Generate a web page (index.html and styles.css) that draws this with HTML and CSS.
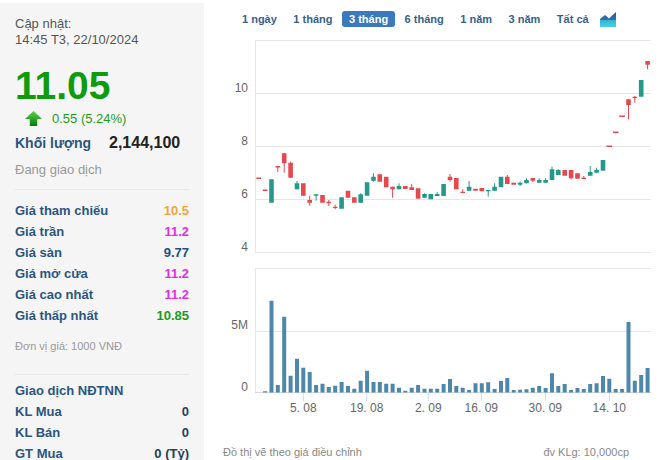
FILE: index.html
```html
<!DOCTYPE html>
<html lang="vi">
<head>
<meta charset="utf-8">
<title>Biểu đồ giá</title>
<link rel="stylesheet" href="styles.css">
</head>
<body>
<div class="wrap">
  <aside class="panel">
    <div class="upd">Cập nhật:<br>14:45 T3, 22/10/2024</div>
    <div class="price">11.05</div>
    <div class="change">
      <svg class="arrow" width="17" height="15" viewBox="0 0 17 15">
        <defs>
          <linearGradient id="ag" x1="0" y1="0" x2="0" y2="1">
            <stop offset="0" stop-color="#5fd34a"/>
            <stop offset="1" stop-color="#067a06"/>
          </linearGradient>
        </defs>
        <path d="M8.5 0L17 8H12.2V15H4.8V8H0Z" fill="url(#ag)"/>
      </svg>
      <span>0.55 (5.24%)</span>
    </div>
    <div class="vol"><span class="vol-l">Khối lượng</span><span class="vol-v">2,144,100</span></div>
    <div class="status">Đang giao dịch</div>
    <div class="sep"></div>
    <div class="rows">
      <div class="row"><span>Giá tham chiếu</span><span class="c-ref">10.5</span></div>
      <div class="row"><span>Giá trần</span><span class="c-ceil">11.2</span></div>
      <div class="row"><span>Giá sàn</span><span class="c-floor">9.77</span></div>
      <div class="row"><span>Giá mở cửa</span><span class="c-ceil">11.2</span></div>
      <div class="row"><span>Giá cao nhất</span><span class="c-ceil">11.2</span></div>
      <div class="row"><span>Giá thấp nhất</span><span class="c-up">10.85</span></div>
    </div>
    <div class="unit">Đơn vị giá: 1000 VNĐ</div>
    <div class="sep sep2"></div>
    <div class="rows rows2">
      <div class="row"><span>Giao dịch NĐTNN</span></div>
      <div class="row"><span>KL Mua</span><span class="c-n">0</span></div>
      <div class="row"><span>KL Bán</span><span class="c-n">0</span></div>
      <div class="row"><span>GT Mua</span><span class="c-n">0 (Tỷ)</span></div>
    </div>
  </aside>
  <main class="chart">
    <div class="ranges">
      <span class="rb">1 ngày</span>
      <span class="rb">1 tháng</span>
      <span class="rb active">3 tháng</span>
      <span class="rb">6 tháng</span>
      <span class="rb">1 năm</span>
      <span class="rb">3 năm</span>
      <span class="rb">Tất cả</span>
      <svg class="type-ic" width="16" height="15" viewBox="0 0 16 15">
        <defs>
          <linearGradient id="ig" x1="0" y1="0" x2="0" y2="1">
            <stop offset="0" stop-color="#2b55a3"/>
            <stop offset=".5" stop-color="#2e6db0"/>
            <stop offset=".56" stop-color="#34b6cf"/>
            <stop offset="1" stop-color="#45d2e2"/>
          </linearGradient>
        </defs>
        <path d="M0 7L5 3L9 6.5L16 0V15H0Z" fill="url(#ig)"/>
      </svg>
    </div>
    <svg class="plot" width="458" height="400" viewBox="204 38 458 400">
      <g class="grid">
        <path d="M255 40.5H651M255 93.5H651M255 146.5H651M255 199.5H651M255 252.5H651"/>
        <path d="M255 268.5H651M255 331.5H651"/>
        <path d="M255.5 40V253M255.5 268V393"/>
      </g>
      <path class="xaxis" d="M255 392.5H651M303.3 393V401M366.7 393V401M428.3 393V401M481.3 393V401M545.3 393V401M609.3 393V401"/>
      <g class="ax">
        <text x="248" y="91.5" text-anchor="end">10</text>
        <text x="248" y="144.5" text-anchor="end">8</text>
        <text x="248" y="197.5" text-anchor="end">6</text>
        <text x="248" y="250.5" text-anchor="end">4</text>
        <text x="248" y="329" text-anchor="end">5M</text>
        <text x="248" y="391" text-anchor="end">0</text>
        <text x="303.3" y="412" text-anchor="middle">5. 08</text>
        <text x="366.7" y="412" text-anchor="middle">19. 08</text>
        <text x="428.3" y="412" text-anchor="middle">2. 09</text>
        <text x="481.3" y="412" text-anchor="middle">16. 09</text>
        <text x="545.3" y="412" text-anchor="middle">30. 09</text>
        <text x="609.3" y="412" text-anchor="middle">14. 10</text>
      </g>
      <path class="wick-r" d="M277.8 166V172M284.2 153V172.7M290.6 161.7V177.7M309.7 195.7V205.7M328.8 200V206M335.2 204.7V209.3M392.6 186.7V197.7M411.7 184V190M450 174V181.7M462.7 189.3V192.7M507.3 175V184M532.8 178V182M571.1 170V179.3M583.8 176V178.7M628.5 99.3V119.3M634.8 96V102.7M647.6 61V69.3"/>
      <path class="wick-g" d="M297 181V189.3M316.1 194.3V200.7M360.7 193.3V202.7M373.5 173.3V181.7M399 183.3V189.3M424.5 193.3V197.7M437.2 192V196M469.1 181V190.7M488.2 190V196.7M494.6 183.3V190.7M520.1 181.7V186M526.5 178.3V183.3M539.2 178.3V182.7M545.6 178.3V182.7M552 166.7V180M558.3 169.3V175M590.2 166V175.7M596.6 167.7V172.7"/>
      <path class="body-r" d="M256.4 177.6h4.6v1.5h-4.6zM262.8 189.6h4.6v1.5h-4.6zM275.5 166h4.6v1.5h-4.6zM281.9 153.3h4.6v10h-4.6zM288.3 162.7h4.6v15h-4.6zM301 183.3h4.6v12.4h-4.6zM307.4 200h4.6v2.7h-4.6zM320.2 195h4.6v7.7h-4.6zM326.5 201.7h4.6v1.6h-4.6zM332.9 206.7h4.6v1.3h-4.6zM345.7 190.7h4.6v7h-4.6zM352 197.3h4.6v5.4h-4.6zM377.5 174.3h4.6v7.4h-4.6zM383.9 176.7h4.6v10.6h-4.6zM390.3 186.7h4.6v2.6h-4.6zM403 186h4.6v3h-4.6zM409.4 187.3h4.6v2.7h-4.6zM415.8 188.3h4.6v10.4h-4.6zM447.7 176.7h4.6v3.3h-4.6zM454 178h4.6v11.3h-4.6zM460.4 191.7h4.6v1.2h-4.6zM473.2 188.7h4.6v2h-4.6zM479.5 188h4.6v3.3h-4.6zM505 176.7h4.6v7.3h-4.6zM511.4 182.7h4.6v2h-4.6zM530.5 178h4.6v2.7h-4.6zM562.4 170h4.6v5.7h-4.6zM568.8 170h4.6v8.3h-4.6zM575.2 173.3h4.6v5.4h-4.6zM581.5 177.7h4.6v1.2h-4.6zM606.5 145.6h5.6v1.5h-5.6zM612.9 131.6h5.6v1.5h-5.6zM619.3 115.6h5.6v1.5h-5.6zM626.2 99.3h4.6v5.7h-4.6zM632.5 96.7h4.6v1.2h-4.6zM645.3 61h4.6v3.7h-4.6z"/>
      <path class="body-g" d="M269.2 179.3h4.6v23.4h-4.6zM294.7 183.3h4.6v6h-4.6zM313.8 194.3h4.6v1.4h-4.6zM339.3 197.3h4.6v11.4h-4.6zM358.4 194.3h4.6v8.4h-4.6zM364.8 182.3h4.6v13.4h-4.6zM371.2 176.7h4.6v4h-4.6zM396.7 186h4.6v3.3h-4.6zM422.2 194h4.6v3.7h-4.6zM428.5 194h4.6v5.3h-4.6zM434.9 194h4.6v2h-4.6zM441.3 184h4.6v12h-4.6zM466.8 186.7h4.6v4h-4.6zM485.9 190h4.6v1.3h-4.6zM492.3 186.7h4.6v4h-4.6zM498.7 176.7h4.6v10.6h-4.6zM517.8 182.7h4.6v2h-4.6zM524.2 180h4.6v3.3h-4.6zM536.9 180h4.6v2.7h-4.6zM543.3 180h4.6v2.7h-4.6zM549.7 169.3h4.6v10.7h-4.6zM556 170h4.6v5h-4.6zM587.9 172h4.6v3.7h-4.6zM594.3 170h4.6v2.7h-4.6zM600.7 160h4.6v10.7h-4.6zM638.9 80h4.6v16.7h-4.6z"/>
      <path class="bars" d="M263.1 391.2h4V392.5h-4zM269.5 300.7h4V392.5h-4zM275.8 385h4V392.5h-4zM282.2 316.7h4V392.5h-4zM288.6 375.7h4V392.5h-4zM295 358.7h4V392.5h-4zM301.3 367.7h4V392.5h-4zM307.7 372h4V392.5h-4zM314.1 385h4V392.5h-4zM320.5 383.7h4V392.5h-4zM326.8 387h4V392.5h-4zM333.2 385.7h4V392.5h-4zM339.6 382h4V392.5h-4zM346 386h4V392.5h-4zM352.3 388.7h4V392.5h-4zM358.7 380.7h4V392.5h-4zM365.1 370.7h4V392.5h-4zM371.5 382h4V392.5h-4zM377.8 382h4V392.5h-4zM384.2 383.7h4V392.5h-4zM390.6 383.7h4V392.5h-4zM397 387.7h4V392.5h-4zM403.3 390.7h4V392.5h-4zM409.7 387.7h4V392.5h-4zM416.1 385h4V392.5h-4zM422.5 388.7h4V392.5h-4zM428.8 388.7h4V392.5h-4zM435.2 388.7h4V392.5h-4zM441.6 384h4V392.5h-4zM448 379h4V392.5h-4zM454.3 386h4V392.5h-4zM460.7 387.7h4V392.5h-4zM467.1 390h4V392.5h-4zM473.5 383.3h4V392.5h-4zM479.8 383.3h4V392.5h-4zM486.2 382.3h4V392.5h-4zM492.6 389h4V392.5h-4zM499 381h4V392.5h-4zM505.3 378h4V392.5h-4zM511.7 390h4V392.5h-4zM518.1 389.7h4V392.5h-4zM524.5 389.3h4V392.5h-4zM530.8 387.7h4V392.5h-4zM537.2 386h4V392.5h-4zM543.6 388h4V392.5h-4zM550 373.3h4V392.5h-4zM556.3 386h4V392.5h-4zM562.7 384h4V392.5h-4zM569.1 390h4V392.5h-4zM575.5 388h4V392.5h-4zM581.8 389h4V392.5h-4zM588.2 384h4V392.5h-4zM594.6 383.3h4V392.5h-4zM601 376h4V392.5h-4zM607.3 378.7h4V392.5h-4zM613.7 389h4V392.5h-4zM620.1 389h4V392.5h-4zM626.5 322h4V392.5h-4zM632.8 380.7h4V392.5h-4zM639.2 375h4V392.5h-4zM645.6 368h4V392.5h-4z"/>
    </svg>
    <div class="foot"><span>Đồ thị vẽ theo giá điều chỉnh</span><span>đv KLg: 10,000cp</span></div>
  </main>
</div>
</body>
</html>
```
FILE: styles.css
```css
* { box-sizing: border-box; }
html, body { margin: 0; padding: 0; background: #fff; }
body {
  font-family: "Liberation Sans", Arial, sans-serif;
  width: 662px;
  height: 460px;
  overflow: hidden;
}
.wrap { display: flex; width: 662px; height: 460px; }

/* left info panel */
.panel {
  width: 204px;
  flex: none;
  margin-top: 3px;
  height: 457px;
  background: #f5f5f5;
  padding: 13px 15px 0 15px;
}
.upd { font-size: 13px; line-height: 16px; color: #555; }
.price {
  margin-top: 16px;
  font-size: 39px;
  line-height: 44px;
  font-weight: bold;
  color: #0e9c0e;
}
.change {
  margin-top: 2px;
  height: 16px;
  display: flex;
  align-items: center;
  gap: 10px;
  padding-left: 10px;
  font-size: 13px;
  color: #1e9a1e;
}
.arrow { display: block; flex: none; }
.vol { margin-top: 5px; height: 24px; line-height: 24px; display: flex; }
.vol-l { width: 94px; font-size: 14px; font-weight: bold; color: #2c5680; }
.vol-v { font-size: 16px; font-weight: bold; color: #222; }
.status { margin-top: 7px; font-size: 13px; line-height: 16px; color: #999; }
.sep { height: 1px; background: #e6e6e6; margin-top: 11px; }
.rows { margin-top: 10px; }
.row {
  display: flex;
  justify-content: space-between;
  height: 21px;
  line-height: 21px;
  font-size: 13px;
  font-weight: bold;
  color: #2c5680;
}
.c-ref { color: #f3a53c; }
.c-ceil { color: #e22ee2; }
.c-floor { color: #23507e; }
.c-up { color: #1c9a1c; }
.c-n { color: #24405f; }
.unit { margin-top: 13px; font-size: 11px; line-height: 14px; color: #999; }
.sep2 { margin-top: 21px; }
.rows2 { margin-top: 5px; }

/* chart area */
.chart { width: 458px; flex: none; display: flex; flex-direction: column; }
.ranges {
  height: 38px;
  display: flex;
  align-items: center;
  gap: 2.5px;
  padding-left: 31px;
}
.rb {
  height: 16px;
  line-height: 16px;
  padding: 0 7px;
  border-radius: 3px;
  font-size: 11px;
  font-weight: bold;
  color: #36618f;
  white-space: nowrap;
}
.rb.active { background: #3a79bb; color: #fff; }
.type-ic { display: block; margin-left: 2px; }
.plot { display: block; flex: none; }
.grid path { stroke: #e6e6e6; stroke-width: 1; fill: none; }
.xaxis { stroke: #d3d9e4; stroke-width: 1; fill: none; }
.ax text { font-family: "Liberation Sans", Arial, sans-serif; font-size: 12px; fill: #666; }
.wick-r { stroke: #e5484d; stroke-width: 1; fill: none; }
.wick-g { stroke: #26988a; stroke-width: 1; fill: none; }
.body-r { fill: #e5484d; }
.body-g { fill: #26988a; }
.bars { fill: #4d87a9; }
.foot {
  display: flex;
  justify-content: space-between;
  padding: 7px 33px 0 19px;
  font-size: 11px;
  line-height: 14px;
  color: #888;
}
```
